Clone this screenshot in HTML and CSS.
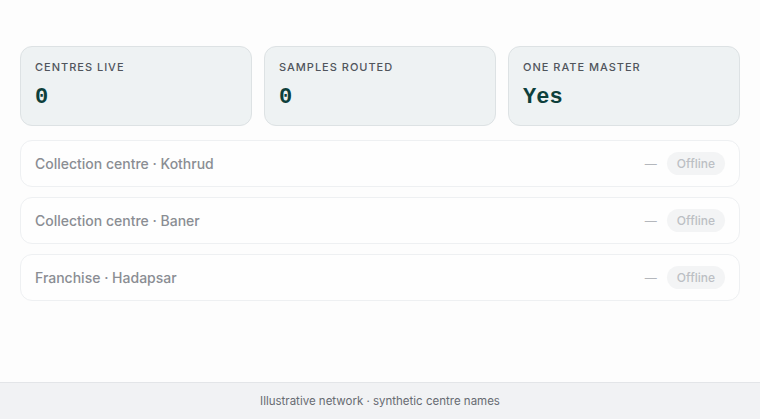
FILE: index.html
```html
<!DOCTYPE html>
<html lang="en">
<head>
  <meta charset="UTF-8">
  <meta name="viewport" content="width=device-width, initial-scale=1.0">
  <title>Centre network</title>
  <link rel="stylesheet" href="styles.css">
</head>
<body>
  <main class="network">
    <div class="stats">
      <div class="stat">
        <div class="stat-label">Centres live</div>
        <div class="stat-value">0</div>
      </div>
      <div class="stat">
        <div class="stat-label">Samples routed</div>
        <div class="stat-value">0</div>
      </div>
      <div class="stat">
        <div class="stat-label">One rate master</div>
        <div class="stat-value">Yes</div>
      </div>
    </div>
    <div class="centres">
      <div class="centre">
        <span class="centre-name">Collection centre · Kothrud</span>
        <span class="centre-count">—</span>
        <span class="badge">Offline</span>
      </div>
      <div class="centre">
        <span class="centre-name">Collection centre · Baner</span>
        <span class="centre-count">—</span>
        <span class="badge">Offline</span>
      </div>
      <div class="centre">
        <span class="centre-name">Franchise · Hadapsar</span>
        <span class="centre-count">—</span>
        <span class="badge">Offline</span>
      </div>
    </div>
  </main>
  <footer class="footer">Illustrative network · synthetic centre names</footer>
</body>
</html>
```

FILE: styles.css
```css
html, body {
  height: 100%;
}
body {
  margin: 0;
  display: flex;
  flex-direction: column;
  font-family: Inter, "Noto Sans", sans-serif;
  background-color: #fdfdfd;
  color: #1f2328;
}
.network {
  padding: 46px 20px 0;
  display: flex;
  flex-direction: column;
  gap: 14px;
}
.stats {
  display: grid;
  grid-template-columns: repeat(3, 1fr);
  gap: 12px;
}
.stat {
  height: 80px;
  box-sizing: border-box;
  padding: 13px 14px;
  background-color: #eef2f3;
  border: 1px solid #dde2e4;
  border-radius: 12px;
}
.stat-label {
  font-size: 11px;
  font-weight: 500;
  letter-spacing: 0.09em;
  text-transform: uppercase;
  color: #50555c;
  line-height: 14px;
}
.stat-value {
  margin-top: 11px;
  font-family: "Liberation Mono", "Courier New", monospace;
  font-weight: 700;
  font-size: 22px;
  line-height: 26px;
  color: #0d3f3b;
}
.centres {
  display: flex;
  flex-direction: column;
  gap: 10px;
}
.centre {
  display: flex;
  align-items: center;
  gap: 10px;
  padding: 11px 14px;
  border: 1px solid #eef0f2;
  border-radius: 12px;
  background-color: #fefefe;
}
.centre-name {
  flex: 1;
  font-size: 14px;
  font-weight: 500;
  color: #8a8d93;
}
.centre-count {
  font-size: 12px;
  color: #b4b7bc;
}
.badge {
  height: 23px;
  line-height: 23px;
  padding: 0 10px;
  border-radius: 12px;
  background-color: #f3f4f5;
  color: #bcbfc4;
  font-size: 12px;
  font-weight: 500;
}
.footer {
  margin-top: auto;
  height: 37px;
  box-sizing: border-box;
  line-height: 36px;
  text-align: center;
  font-size: 11.5px;
  color: #676b72;
  background-color: #f1f2f4;
  border-top: 1px solid #e3e5e8;
}
```
